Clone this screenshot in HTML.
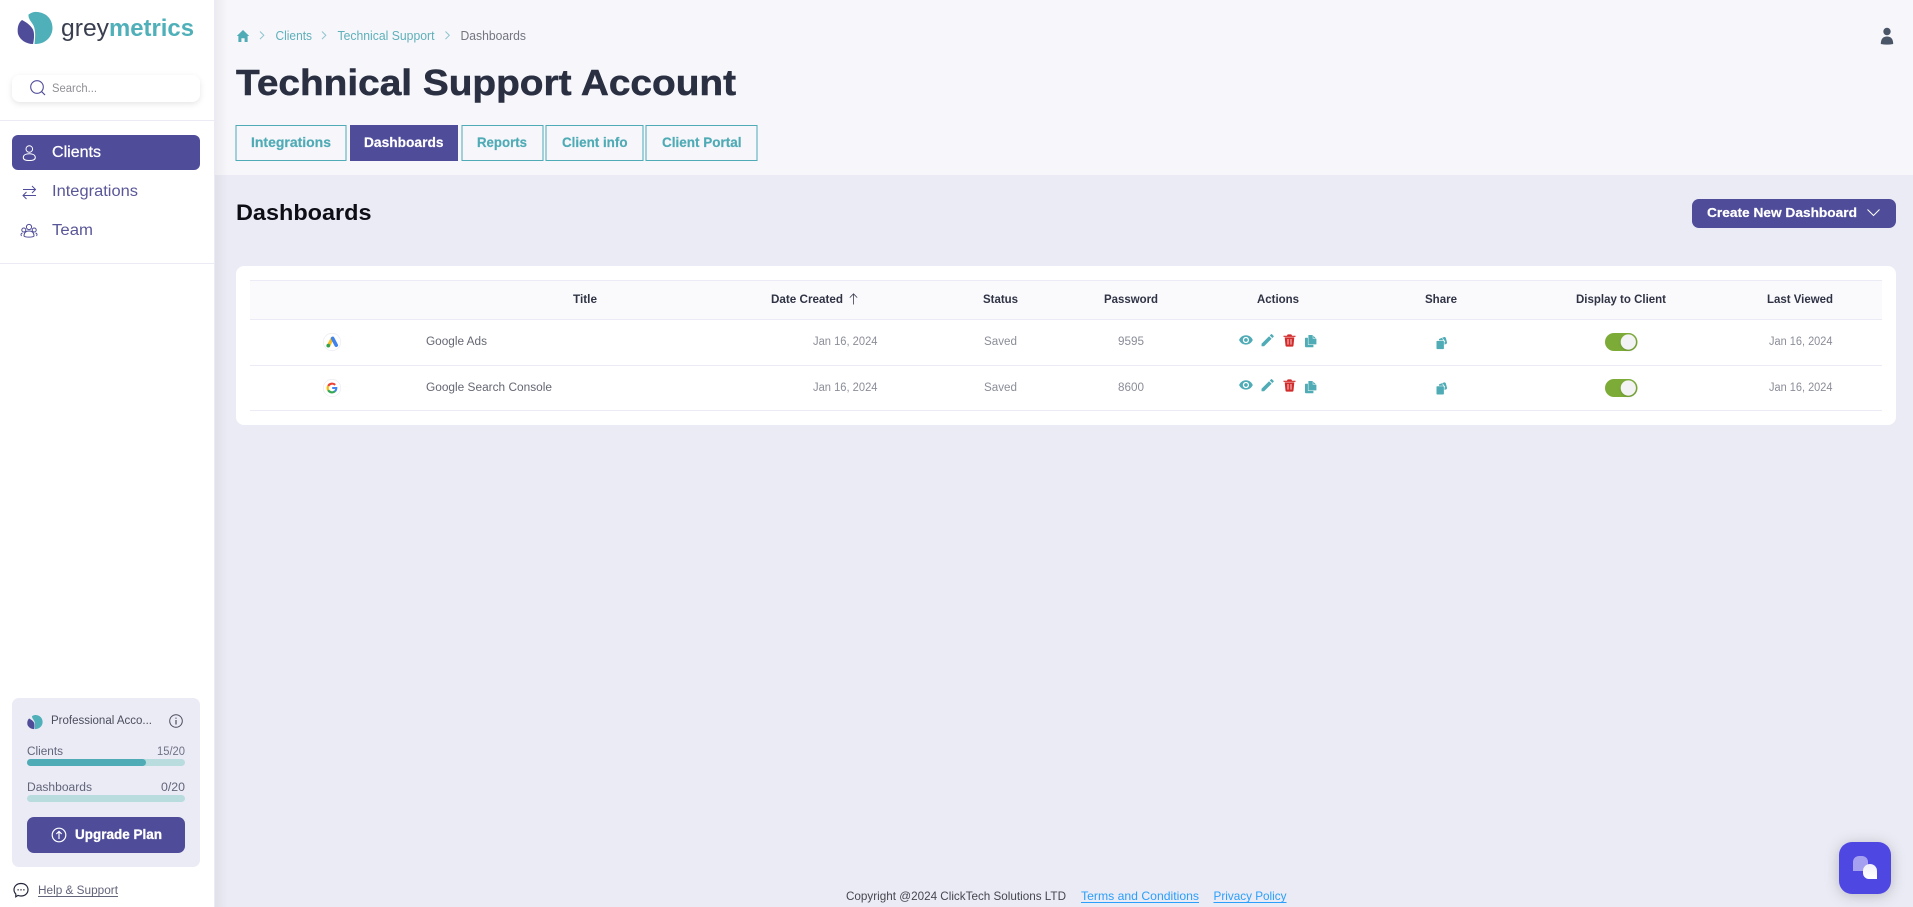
<!DOCTYPE html>
<html lang="en">
<head>
<meta charset="utf-8">
<title>Technical Support Account - greymetrics</title>
<style>
html,body{margin:0;padding:0;width:1913px;height:907px;overflow:hidden;background:#ebebf5}
svg{display:block}
text{font-family:"Liberation Sans",Arial,sans-serif;white-space:pre}
.b{font-weight:700}
.th{font-size:11.5px;font-weight:700;fill:#2f3344}
.td{font-size:11.5px;fill:#8b8d98}
.nm{font-size:11.5px;fill:#656773}
.tab{font-size:14px;font-weight:700;fill:#4fabb5;stroke:#4fabb5;stroke-width:.2px}
.crumb{font-size:12.5px;fill:#5fb0b9}
.sm{font-size:11.5px;fill:#62647a}
</style>
</head>
<body>
<svg width="1913" height="907" viewBox="0 0 1913 907" xmlns="http://www.w3.org/2000/svg">
<defs>
<linearGradient id="shade" x1="0" x2="1" y1="0" y2="0"><stop offset="0" stop-color="#000" stop-opacity=".045"/><stop offset="1" stop-color="#000" stop-opacity="0"/></linearGradient>
<linearGradient id="wht" x1="0" x2="0" y1="0" y2="1"><stop offset="0" stop-color="#f0effb"/><stop offset="1" stop-color="#fff"/></linearGradient>
<filter id="sh1" x="-20%" y="-40%" width="140%" height="200%"><feDropShadow dx="0" dy="2" stdDeviation="3" flood-color="#000" flood-opacity=".10"/></filter>
<filter id="sh2" x="-60%" y="-60%" width="220%" height="220%"><feDropShadow dx="0" dy="2" stdDeviation="7" flood-color="#000" flood-opacity=".22"/></filter>
<filter id="sh3" x="-20%" y="-30%" width="140%" height="170%"><feDropShadow dx="0" dy="1" stdDeviation="1" flood-color="#000" flood-opacity=".18"/></filter>
<g id="leaf">
<path fill="#4fb0b9" d="M28.5 14.5Q33 11.5 37 12C46 12.5 52.5 19 52.5 28C52.5 37 45 44 36 44L34.5 44C35.5 36 35.5 30 33.5 25.5C31.5 21.5 28 19 28.5 14.5Z"/>
<path fill="#4f4c99" d="M22 20C26 22 32 26 33.5 31C34.5 35 34 40 33 44C26 44 20 40 18 34C17 29 18 23 22 20Z"/>
</g>
<path id="eye" fill="#4fabb5" d="M12 4.5C7 4.5 2.73 7.61 1 12c1.73 4.39 6 7.5 11 7.5s9.27-3.11 11-7.5c-1.73-4.39-6-7.5-11-7.5zM12 17c-2.76 0-5-2.24-5-5s2.24-5 5-5 5 2.24 5 5-2.24 5-5 5zm0-8c-1.66 0-3 1.34-3 3s1.34 3 3 3 3-1.34 3-3-1.34-3-3-3z"/>
<path id="pen" fill="#4fabb5" d="M3 17.25V21h3.75L17.81 9.94l-3.75-3.75L3 17.25zM20.71 7.04a1 1 0 0 0 0-1.41l-2.34-2.34a1 1 0 0 0-1.41 0l-1.83 1.83 3.75 3.75 1.83-1.83z"/>
<g id="trash">
<path fill="#d22b2b" d="M1.2 3.4H10.8L10 11.5Q9.9 12.6 8.9 12.6H3.1Q2.1 12.6 2 11.5ZM0 1.7H3.4L4.2 .4H7.8L8.6 1.7H12V2.9H0Z"/>
<path stroke="#f6d0d0" stroke-width="1" d="M4.5 5V10.6M7.5 5V10.6"/>
</g>
<g id="copy">
<path fill="#4fabb5" d="M0 3.5Q0 2.8 .8 2.8H2.9V9.9H8.4V12.2H.8Q0 12.2 0 11.4Z"/>
<path fill="#4fabb5" d="M3.4 0H7.4L11.4 3.9V9.4H3.4Z"/>
<path fill="#fff" d="M7.7 0 11.4 3.6H7.7Z" opacity=".8"/>
<path fill="#4fabb5" d="M8.3 .8 10.6 3H8.3Z"/>
</g>
<g id="share">
<path fill="#4fabb5" d="M3 2.2 8.2 .2Q9.2 0 9.8 1L11 5.6Q11.2 6.8 10 7.2L7 8.4H3Z"/>
<path fill="none" stroke="#fff" stroke-width=".7" d="M6.4 1.5 9 5"/>
<rect x=".2" y="3.8" width="8" height="8.8" rx="1" fill="#4fabb5" stroke="#fff" stroke-width=".6"/>
</g>
<g id="toggle">
<rect x="0" y="0" width="32.5" height="18" rx="9" fill="#7cab38"/>
<circle cx="23.3" cy="9" r="7.6" fill="#f3f3f5" filter="url(#sh3)"/>
</g>
<g id="chev"><path fill="none" stroke="#8cc5cc" stroke-width="1" d="M0 0 3.8 3.8 0 7.6"/></g>
<g id="gads">
<path d="M5.9 -3.4 2.9 2.4" stroke="#f6bd26" stroke-width="3.4" stroke-linecap="round" fill="none"/>
<circle cx="2" cy="3.6" r="1.9" fill="#34a24f"/>
<path d="M6.4 -3.6 9.9 3.2" stroke="#3f83ec" stroke-width="3.6" stroke-linecap="round" fill="none"/>
</g>
</defs>

<!-- main background -->
<rect x="0" y="0" width="1913" height="907" fill="#ebebf5"/>
<rect x="215" y="0" width="1698" height="175" fill="#f6f6fb"/>
<rect x="215" y="0" width="13" height="907" fill="url(#shade)"/>

<!-- sidebar -->
<rect x="0" y="0" width="214" height="907" fill="#fff"/>
<use href="#leaf"/>
<text x="61" y="36" font-size="24" fill="#3a3f50" textLength="48" lengthAdjust="spacingAndGlyphs">grey</text>
<text x="109" y="36" font-size="24" font-weight="700" fill="#4fb0b9" textLength="85" lengthAdjust="spacingAndGlyphs">metrics</text>

<rect x="12" y="75" width="188" height="27" rx="8" fill="#fff" filter="url(#sh1)"/>
<circle cx="37" cy="87" r="6.3" fill="none" stroke="#4f4c99" stroke-width="1.1"/>
<path d="M41.5 91.5 45 95" stroke="#4f4c99" stroke-width="1.2" fill="none"/>
<text x="52" y="92" font-size="11.5" fill="#8f8f96" textLength="45" lengthAdjust="spacingAndGlyphs">Search...</text>
<rect x="0" y="120" width="214" height="1" fill="#ebebf5"/>

<rect x="12" y="135" width="188" height="35" rx="6" fill="#4f4c99"/>
<g fill="none" stroke="#fff" stroke-width="1">
<circle cx="29.3" cy="149" r="3.3"/>
<path d="M23.3 157.5C23.3 155 26 153.8 29.3 153.8C32.6 153.8 35.3 155 35.3 157.5C35.3 160 33 160.5 29.3 160.5C25.6 160.5 23.3 160 23.3 157.5Z"/>
</g>
<text x="52" y="157" font-size="15.5" fill="#fff" stroke="#fff" stroke-width=".25" textLength="49" lengthAdjust="spacingAndGlyphs">Clients</text>

<g fill="none" stroke="#4f4c99" stroke-width="1">
<path d="M23 189.5H35.5M32 186 35.5 189.5 32 193"/>
<path d="M36 195.5H23M26.5 192 23 195.5 26.5 199"/>
</g>
<text x="52" y="196" font-size="15.5" fill="#5a5799" textLength="86" lengthAdjust="spacingAndGlyphs">Integrations</text>

<g fill="none" stroke="#4f4c99" stroke-width="1">
<circle cx="29" cy="227" r="2.6"/>
<circle cx="23.8" cy="230" r="2"/>
<circle cx="34.2" cy="230" r="2"/>
<path d="M24 236C24 232.5 26 231 29 231C32 231 34 232.5 34 236C33 237.5 25 237.5 24 236Z"/>
<path d="M21.5 236C20.5 234.5 21 233.3 22.5 233M36.5 236C37.5 234.5 37 233.3 35.5 233"/>
</g>
<text x="52" y="235" font-size="15.5" fill="#5a5799" textLength="41" lengthAdjust="spacingAndGlyphs">Team</text>
<rect x="0" y="263" width="214" height="1" fill="#ebebf5"/>

<!-- plan card -->
<rect x="12" y="698" width="188" height="169" rx="7" fill="#ebebf5"/>
<g transform="translate(27 715) scale(.44) translate(-17 -12)"><use href="#leaf"/></g>
<text x="51" y="724" font-size="11.5" fill="#4b4d5e" textLength="101" lengthAdjust="spacingAndGlyphs">Professional Acco...</text>
<circle cx="176" cy="721" r="6.3" fill="none" stroke="#4b4d5e" stroke-width="1"/>
<path d="M176 720V724.5M176 717.6V718.8" stroke="#4b4d5e" stroke-width="1.2" fill="none"/>
<text x="27" y="755" class="sm" textLength="36" lengthAdjust="spacingAndGlyphs">Clients</text>
<text x="157" y="755" class="sm" fill-opacity=".9" textLength="28" lengthAdjust="spacingAndGlyphs">15/20</text>
<rect x="27" y="759" width="158" height="7" rx="3.5" fill="#b9dcdf"/>
<rect x="27" y="759" width="119" height="7" rx="3.5" fill="#4fabb5"/>
<text x="27" y="791" class="sm" textLength="65" lengthAdjust="spacingAndGlyphs">Dashboards</text>
<text x="161" y="791" class="sm" textLength="24" lengthAdjust="spacingAndGlyphs">0/20</text>
<rect x="27" y="795" width="158" height="7" rx="3.5" fill="#b9dcdf"/>
<rect x="27" y="817" width="158" height="36" rx="7" fill="#4f4c99"/>
<circle cx="59" cy="835" r="6.8" fill="none" stroke="#fff" stroke-width="1.2"/>
<path d="M59 839V831.5M56.3 834 59 831.4 61.7 834" stroke="#fff" stroke-width="1.2" fill="none"/>
<text x="75" y="839" font-size="13.5" font-weight="700" fill="#fff" stroke="#fff" stroke-width=".3" textLength="87" lengthAdjust="spacingAndGlyphs">Upgrade Plan</text>

<path d="M21 883.5C25.5 883.5 28 886.4 28 889.8C28 893.3 25.2 896 21 896C19.8 896 19 895.9 18 895.4L15.8 896.8 15.8 894C14.6 892.8 14 891.4 14 889.8C14 886.4 16.6 883.5 21 883.5Z" fill="none" stroke="#23253a" stroke-width="1.2"/>
<path d="M17.5 889.8H18.7M20.4 889.8H21.6M23.3 889.8H24.5" stroke="#23253a" stroke-width="1.4"/>
<text x="38" y="894" font-size="11.5" fill="#62647a" textLength="80" lengthAdjust="spacingAndGlyphs">Help &amp; Support</text>
<rect x="38" y="896" width="80" height="1" fill="#62647a"/>

<!-- breadcrumb -->
<path d="M243 30 236.8 36 238.4 36V42H241.4V38.2H244.6V42H247.6V36H249.2Z" fill="#4fabb5"/>
<use href="#chev" x="260" y="31.5"/>
<text x="275.5" y="40" class="crumb" textLength="36.5" lengthAdjust="spacingAndGlyphs">Clients</text>
<use href="#chev" x="322" y="31.5"/>
<text x="337.5" y="40" class="crumb" textLength="97" lengthAdjust="spacingAndGlyphs">Technical Support</text>
<use href="#chev" x="445.5" y="31.5"/>
<text x="460.5" y="40" font-size="12.5" fill="#74757f" textLength="65.5" lengthAdjust="spacingAndGlyphs">Dashboards</text>

<circle cx="1887" cy="31.5" r="3.7" fill="#4a5568"/>
<path d="M1880.8 44C1880.8 39 1883 36.5 1887 36.5C1891 36.5 1893.2 39 1893.2 44Q1887 45.2 1880.8 44Z" fill="#4a5568"/>

<!-- title -->
<text x="236" y="95" font-size="36" font-weight="700" fill="#2a3042" stroke="#2a3042" stroke-width=".5" textLength="500" lengthAdjust="spacingAndGlyphs">Technical Support Account</text>

<!-- tabs -->
<g fill="#f6f6fb" stroke="#4fabb5" stroke-width="1">
<rect x="236" y="125.5" width="110" height="35"/>
<rect x="462" y="125.5" width="81" height="35"/>
<rect x="546" y="125.5" width="97" height="35"/>
<rect x="646" y="125.5" width="111" height="35"/>
</g>
<rect x="350" y="125" width="108" height="36" fill="#4f4c99"/>
<text x="251" y="147" class="tab" textLength="80" lengthAdjust="spacingAndGlyphs">Integrations</text>
<text x="364" y="147" font-size="14" font-weight="700" fill="#fff" stroke="#fff" stroke-width=".2" textLength="79.5" lengthAdjust="spacingAndGlyphs">Dashboards</text>
<text x="477" y="147" class="tab" textLength="50" lengthAdjust="spacingAndGlyphs">Reports</text>
<text x="562" y="147" class="tab" textLength="65.5" lengthAdjust="spacingAndGlyphs">Client info</text>
<text x="662" y="147" class="tab" textLength="79.5" lengthAdjust="spacingAndGlyphs">Client Portal</text>

<!-- section head -->
<text x="236" y="220" font-size="22" font-weight="700" fill="#0d0d16" textLength="135.5" lengthAdjust="spacingAndGlyphs">Dashboards</text>
<rect x="1692" y="199" width="204" height="29" rx="7" fill="#4f4c99"/>
<text x="1707" y="217" font-size="13" font-weight="700" fill="#fff" stroke="#fff" stroke-width=".2" textLength="150" lengthAdjust="spacingAndGlyphs">Create New Dashboard</text>
<path d="M1867.5 209.5 1873.5 215.5 1879.5 209.5" fill="none" stroke="#fff" stroke-width="1"/>

<!-- table card -->
<rect x="236" y="266" width="1660" height="159" rx="8" fill="#fff"/>
<rect x="250" y="280" width="1632" height="39" fill="#fafafd"/>
<g fill="#ebebf5">
<rect x="250" y="280" width="1632" height="1"/>
<rect x="250" y="319" width="1632" height="1"/>
<rect x="250" y="365" width="1632" height="1"/>
<rect x="250" y="410" width="1632" height="1"/>
</g>
<text x="573" y="303" class="th" textLength="24" lengthAdjust="spacingAndGlyphs">Title</text>
<text x="771" y="303" class="th" textLength="72" lengthAdjust="spacingAndGlyphs">Date Created</text>
<path d="M853.5 304.5V294M849.8 297.6 853.5 293.8 857.2 297.6" fill="none" stroke="#3a3d4d" stroke-width=".8"/>
<text x="983" y="303" class="th" textLength="35" lengthAdjust="spacingAndGlyphs">Status</text>
<text x="1104" y="303" class="th" textLength="54" lengthAdjust="spacingAndGlyphs">Password</text>
<text x="1257" y="303" class="th" textLength="42" lengthAdjust="spacingAndGlyphs">Actions</text>
<text x="1425" y="303" class="th" textLength="32" lengthAdjust="spacingAndGlyphs">Share</text>
<text x="1576" y="303" class="th" textLength="90" lengthAdjust="spacingAndGlyphs">Display to Client</text>
<text x="1767" y="303" class="th" textLength="66" lengthAdjust="spacingAndGlyphs">Last Viewed</text>

<!-- row 1 -->
<circle cx="332" cy="342" r="8.7" fill="#fff" stroke="#eeeef4" stroke-width=".8"/>
<use href="#gads" x="326.3" y="342"/>
<text x="426" y="345" class="nm" textLength="61" lengthAdjust="spacingAndGlyphs">Google Ads</text>
<text x="813" y="345" class="td" textLength="64.5" lengthAdjust="spacingAndGlyphs">Jan 16, 2024</text>
<text x="984" y="345" class="td" textLength="33" lengthAdjust="spacingAndGlyphs">Saved</text>
<text x="1118" y="345" class="td" textLength="26" lengthAdjust="spacingAndGlyphs">9595</text>
<use href="#eye" transform="translate(1238.5 332.5) scale(.62)"/>
<use href="#pen" transform="translate(1259.5 332) scale(.68)"/>
<use href="#trash" x="1283.5" y="334"/>
<use href="#copy" x="1305" y="335"/>
<use href="#share" x="1436" y="336.8"/>
<use href="#toggle" x="1605" y="333"/>
<text x="1769" y="345" class="td" textLength="63.5" lengthAdjust="spacingAndGlyphs">Jan 16, 2024</text>

<!-- row 2 -->
<circle cx="332" cy="388" r="8.7" fill="#fff" stroke="#eeeef4" stroke-width=".8"/>
<g fill="none" stroke-width="2.1">
<path d="M335.2 384.9A4.4 4.4 0 0 0 328.2 386" stroke="#ea4335"/>
<path d="M328.2 386A4.4 4.4 0 0 0 328.2 390.2" stroke="#fbbc05"/>
<path d="M328.2 390.2A4.4 4.4 0 0 0 335 391.2" stroke="#34a853"/>
<path d="M335 391.2A4.4 4.4 0 0 0 336.3 388H332.2" stroke="#4285f4"/>
</g>
<text x="426" y="391" class="nm" textLength="126" lengthAdjust="spacingAndGlyphs">Google Search Console</text>
<text x="813" y="391" class="td" textLength="64.5" lengthAdjust="spacingAndGlyphs">Jan 16, 2024</text>
<text x="984" y="391" class="td" textLength="33" lengthAdjust="spacingAndGlyphs">Saved</text>
<text x="1118" y="391" class="td" textLength="26" lengthAdjust="spacingAndGlyphs">8600</text>
<use href="#eye" transform="translate(1238.5 377.5) scale(.62)"/>
<use href="#pen" transform="translate(1259.5 377) scale(.68)"/>
<use href="#trash" x="1283.5" y="379"/>
<use href="#copy" x="1305" y="381"/>
<use href="#share" x="1436" y="382.2"/>
<use href="#toggle" x="1605" y="379"/>
<text x="1769" y="391" class="td" textLength="63.5" lengthAdjust="spacingAndGlyphs">Jan 16, 2024</text>

<!-- footer -->
<text x="846" y="900" font-size="12" fill="#46474f" textLength="220" lengthAdjust="spacingAndGlyphs">Copyright @2024 ClickTech Solutions LTD</text>
<text x="1081" y="900" font-size="12" fill="#2a9ffb" textLength="118" lengthAdjust="spacingAndGlyphs">Terms and Conditions</text>
<rect x="1081" y="902" width="118" height="1" fill="#2a9ffb"/>
<text x="1213.5" y="900" font-size="12" fill="#2a9ffb" textLength="73" lengthAdjust="spacingAndGlyphs">Privacy Policy</text>
<rect x="1213.5" y="902" width="73" height="1" fill="#2a9ffb"/>

<!-- chat widget -->
<rect x="1839" y="842" width="52" height="52" rx="13" fill="#5046e1" filter="url(#sh2)"/>
<path d="M1853 871V862A6 6 0 0 1 1859 856H1862A6 6 0 0 1 1868 862V871Z" fill="#a6a0f0"/>
<path d="M1870 864A7 7 0 0 1 1877 871V879H1869A6 6 0 0 1 1863 873V871A7 7 0 0 1 1870 864Z" fill="url(#wht)"/>
</svg>
</body>
</html>
